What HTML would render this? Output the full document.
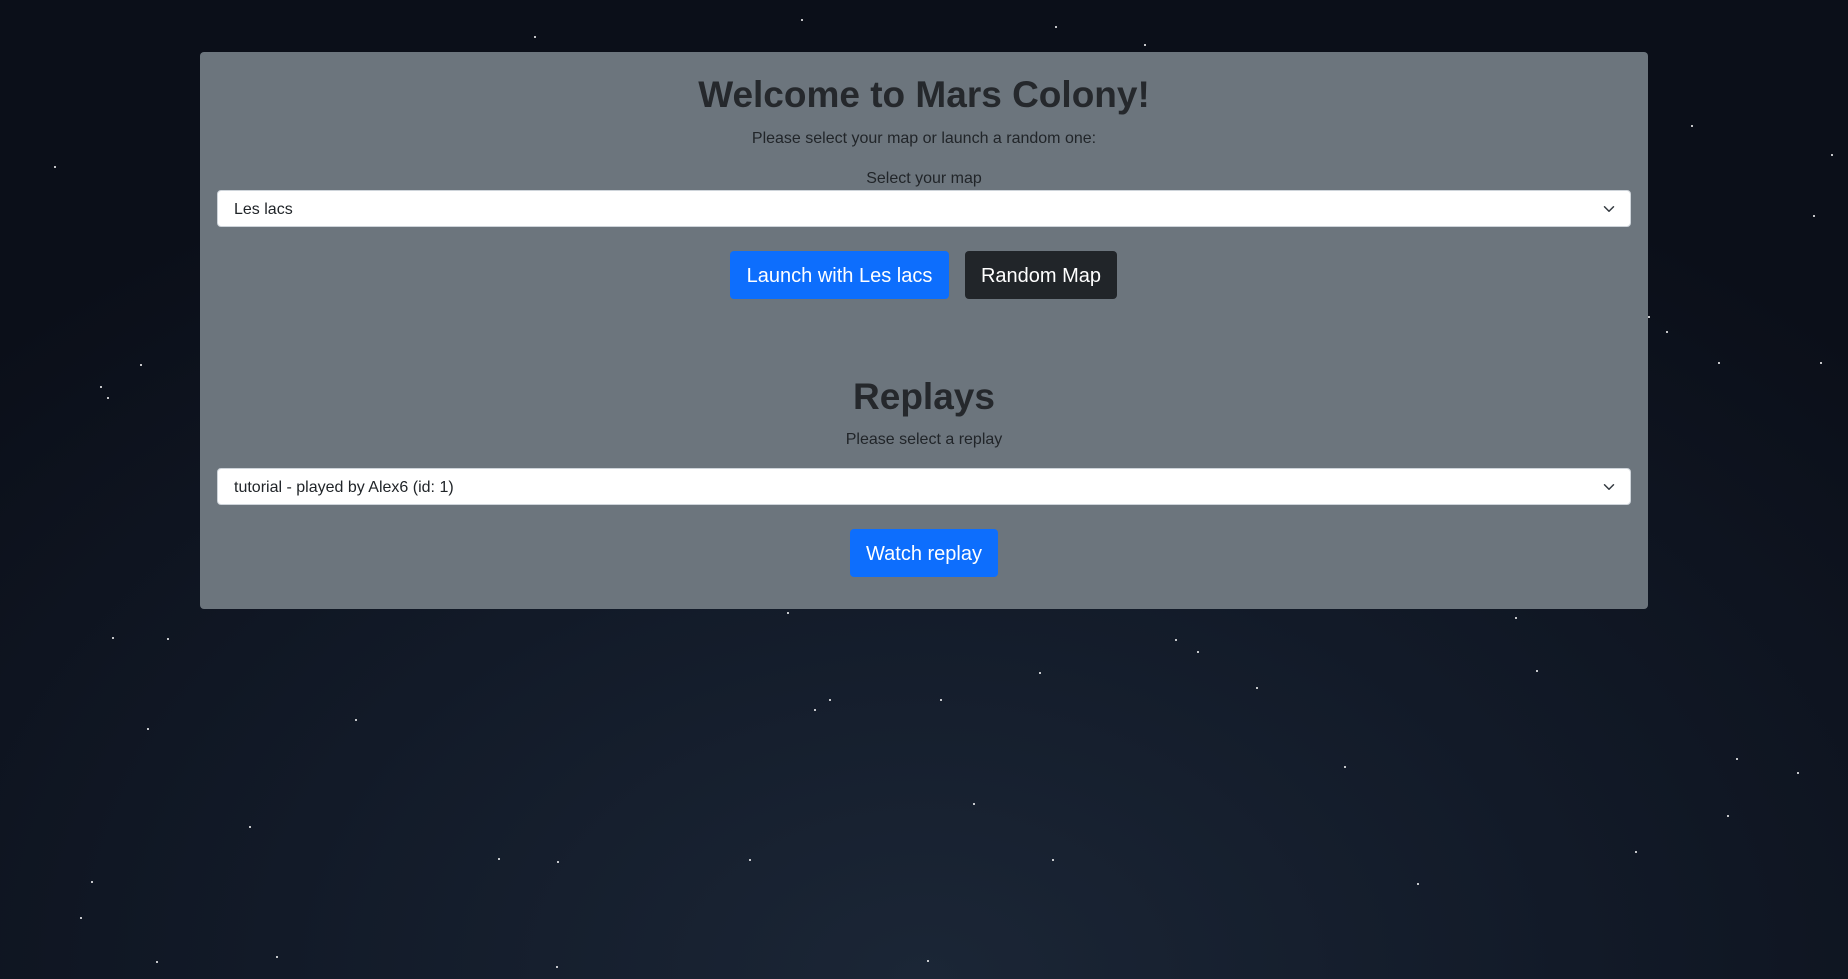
<!DOCTYPE html>
<html><head><meta charset="utf-8"><style>
*{box-sizing:border-box;margin:0;padding:0}
html,body{width:1848px;height:979px;overflow:hidden}
body{font-family:"Liberation Sans",sans-serif;color:#212529;background:radial-gradient(ellipse 1300px 900px at 50% 100%,#1b2636 0%,#121a28 50%,#0b0f19 100%);position:relative}
.s{position:absolute;width:2px;height:2px;background:#fff;border-radius:1px}
.card{position:absolute;left:200px;top:52px;width:1448px;height:557px;background:#6c757d;border-radius:4px}
.c{position:absolute;left:0;width:100%;text-align:center}
h1{font-size:37px;font-weight:700;line-height:1;color:#25282c}
.sel{position:absolute;left:17px;width:1414px;height:37px;background:#fff;border:1px solid #ced4da;border-radius:4px;font-size:16px;line-height:37px;padding-left:16px}
.sel svg{position:absolute;right:14px;top:12px}
.btn{position:absolute;height:48px;line-height:50px;font-size:20px;color:#fff;text-align:center;border-radius:4px}
</style></head><body>
<div class="s" style="left:534px;top:36px"></div><div class="s" style="left:801px;top:19px"></div><div class="s" style="left:1055px;top:26px"></div><div class="s" style="left:1144px;top:44px"></div>
<div class="s" style="left:54px;top:166px"></div><div class="s" style="left:1691px;top:125px"></div><div class="s" style="left:1831px;top:154px"></div><div class="s" style="left:1813px;top:215px"></div>
<div class="s" style="left:1648px;top:316px"></div><div class="s" style="left:1666px;top:331px"></div><div class="s" style="left:1718px;top:362px"></div><div class="s" style="left:1820px;top:362px"></div>
<div class="s" style="left:140px;top:364px"></div><div class="s" style="left:100px;top:386px"></div><div class="s" style="left:107px;top:397px"></div>
<div class="s" style="left:112px;top:637px"></div><div class="s" style="left:167px;top:638px"></div><div class="s" style="left:787px;top:612px"></div><div class="s" style="left:1515px;top:617px"></div>
<div class="s" style="left:1175px;top:639px"></div><div class="s" style="left:1197px;top:651px"></div><div class="s" style="left:1039px;top:672px"></div><div class="s" style="left:1536px;top:670px"></div><div class="s" style="left:1256px;top:687px"></div>
<div class="s" style="left:829px;top:699px"></div><div class="s" style="left:814px;top:709px"></div><div class="s" style="left:940px;top:699px"></div><div class="s" style="left:355px;top:719px"></div><div class="s" style="left:147px;top:728px"></div>
<div class="s" style="left:1344px;top:766px"></div><div class="s" style="left:1736px;top:758px"></div><div class="s" style="left:1797px;top:772px"></div><div class="s" style="left:973px;top:803px"></div>
<div class="s" style="left:249px;top:826px"></div><div class="s" style="left:1727px;top:815px"></div><div class="s" style="left:1635px;top:851px"></div><div class="s" style="left:91px;top:881px"></div><div class="s" style="left:498px;top:858px"></div>
<div class="s" style="left:557px;top:861px"></div><div class="s" style="left:749px;top:859px"></div><div class="s" style="left:1052px;top:859px"></div><div class="s" style="left:1417px;top:883px"></div><div class="s" style="left:80px;top:917px"></div>
<div class="s" style="left:156px;top:961px"></div><div class="s" style="left:276px;top:956px"></div><div class="s" style="left:556px;top:966px"></div><div class="s" style="left:927px;top:960px"></div>
<div class="card">
<h1 class="c" style="top:24px">Welcome to Mars Colony!</h1>
<div class="c" style="top:78px;font-size:16px">Please select your map or launch a random one:</div>
<div class="c" style="top:118px;font-size:16px">Select your map</div>
<div class="sel" style="top:138px">Les lacs<svg width="14" height="12" viewBox="0 0 16 16"><path d="M2 5l6 6 6-6" fill="none" stroke="#343a40" stroke-width="2" stroke-linecap="round" stroke-linejoin="round"/></svg></div>
<div class="btn" style="left:530px;top:199px;width:219px;background:#0d6efd">Launch with Les lacs</div>
<div class="btn" style="left:765px;top:199px;width:152px;background:#212529">Random Map</div>
<h1 class="c" style="top:326px">Replays</h1>
<div class="c" style="top:379px;font-size:16px">Please select a replay</div>
<div class="sel" style="top:416px">tutorial - played by Alex6 (id: 1)<svg width="14" height="12" viewBox="0 0 16 16"><path d="M2 5l6 6 6-6" fill="none" stroke="#343a40" stroke-width="2" stroke-linecap="round" stroke-linejoin="round"/></svg></div>
<div class="btn" style="left:650px;top:477px;width:148px;background:#0d6efd">Watch replay</div>
</div>
</body></html>
